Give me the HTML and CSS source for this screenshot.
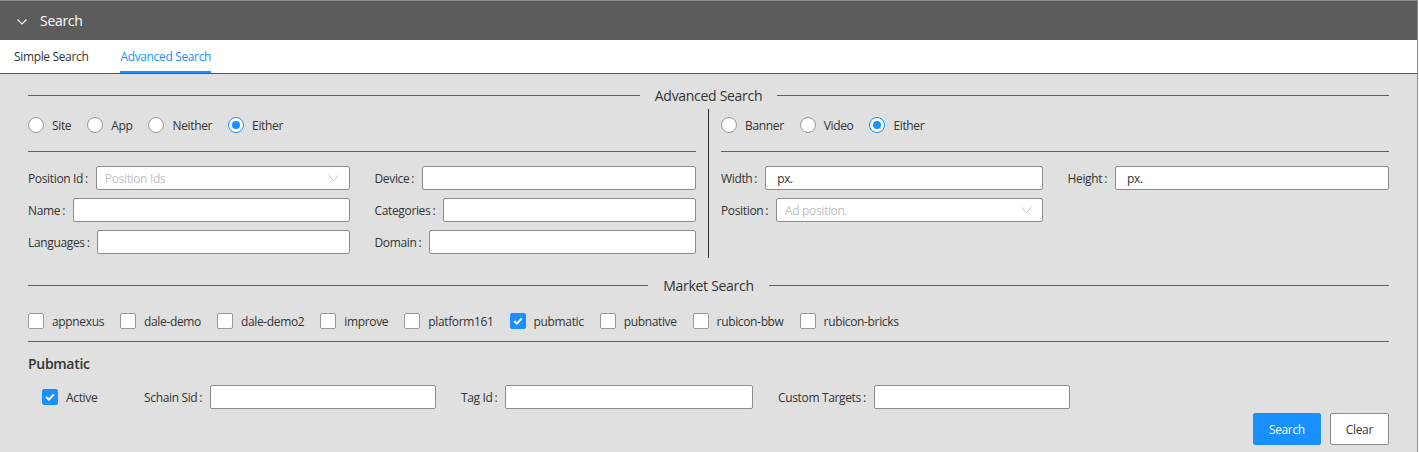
FILE: index.html
```html
<!DOCTYPE html>
<html>
<head>
<meta charset="utf-8">
<link rel="stylesheet" href="styles.css">
</head>
<body>
<div class="panel">
  <div class="panel-header">
    <svg class="chev" width="10" height="6" viewBox="0 0 10 6"><path d="M0.5 0.5 L5 5 L9.5 0.5" fill="none" stroke="#fff" stroke-width="1.1"/></svg>
    <span class="panel-title">Search</span>
  </div>
  <div class="tabs">
    <div class="tab">Simple Search</div>
    <div class="tab active">Advanced Search</div>
  </div>
  <div class="content">
    <div class="divider"><span>Advanced Search</span></div>
    <div class="adv">
      <div class="col">
        <div class="radios">
          <label class="radio"><span class="circle"></span><span class="rtext">Site</span></label>
          <label class="radio"><span class="circle"></span><span class="rtext">App</span></label>
          <label class="radio"><span class="circle"></span><span class="rtext">Neither</span></label>
          <label class="radio"><span class="circle on"></span><span class="rtext">Either</span></label>
        </div>
        <div class="hr"></div>
        <div class="grid">
          <div class="field"><span class="lbl">Position Id<span class="colon">:</span></span><div class="input select"><span class="ph">Position Ids</span><svg class="arrow" width="11" height="7" viewBox="0 0 11 7"><path d="M0.5 0.5 L5.5 5.8 L10.5 0.5" fill="none" stroke="#bfbfbf" stroke-width="1"/></svg></div></div>
          <div class="field"><span class="lbl">Device<span class="colon">:</span></span><div class="input"></div></div>
          <div class="field"><span class="lbl">Name<span class="colon">:</span></span><div class="input"></div></div>
          <div class="field"><span class="lbl">Categories<span class="colon">:</span></span><div class="input"></div></div>
          <div class="field"><span class="lbl">Languages<span class="colon">:</span></span><div class="input"></div></div>
          <div class="field"><span class="lbl">Domain<span class="colon">:</span></span><div class="input"></div></div>
        </div>
      </div>
      <div class="vsep"></div>
      <div class="col">
        <div class="radios">
          <label class="radio"><span class="circle"></span><span class="rtext">Banner</span></label>
          <label class="radio"><span class="circle"></span><span class="rtext">Video</span></label>
          <label class="radio"><span class="circle on"></span><span class="rtext">Either</span></label>
        </div>
        <div class="hr"></div>
        <div class="grid">
          <div class="field"><span class="lbl">Width<span class="colon">:</span></span><div class="input"><span class="val">px.</span></div></div>
          <div class="field"><span class="lbl">Height<span class="colon">:</span></span><div class="input"><span class="val">px.</span></div></div>
          <div class="field"><span class="lbl">Position<span class="colon">:</span></span><div class="input select"><span class="ph">Ad position.</span><svg class="arrow" width="11" height="7" viewBox="0 0 11 7"><path d="M0.5 0.5 L5.5 5.8 L10.5 0.5" fill="none" stroke="#bfbfbf" stroke-width="1"/></svg></div></div>
        </div>
      </div>
    </div>
    <div class="divider market"><span>Market Search</span></div>
    <div class="checks">
      <label class="check"><span class="box"></span><span class="ctext">appnexus</span></label>
      <label class="check"><span class="box"></span><span class="ctext">dale-demo</span></label>
      <label class="check"><span class="box"></span><span class="ctext">dale-demo2</span></label>
      <label class="check"><span class="box"></span><span class="ctext">improve</span></label>
      <label class="check"><span class="box"></span><span class="ctext">platform161</span></label>
      <label class="check"><span class="box on"><svg width="10" height="8" viewBox="0 0 10 8"><path d="M1.2 4 L3.9 6.6 L8.8 1.4" fill="none" stroke="#fff" stroke-width="2"/></svg></span><span class="ctext">pubmatic</span></label>
      <label class="check"><span class="box"></span><span class="ctext">pubnative</span></label>
      <label class="check"><span class="box"></span><span class="ctext">rubicon-bbw</span></label>
      <label class="check"><span class="box"></span><span class="ctext">rubicon-bricks</span></label>
    </div>
    <div class="hr full"></div>
    <h3 class="section">Pubmatic</h3>
    <div class="pub-row">
      <label class="check active-check"><span class="box on"><svg width="10" height="8" viewBox="0 0 10 8"><path d="M1.2 4 L3.9 6.6 L8.8 1.4" fill="none" stroke="#fff" stroke-width="2"/></svg></span><span class="ctext">Active</span></label>
      <div class="field pub"><span class="lbl">Schain Sid<span class="colon">:</span></span><div class="input"></div></div>
      <div class="field pub"><span class="lbl">Tag Id<span class="colon">:</span></span><div class="input"></div></div>
      <div class="field pub"><span class="lbl">Custom Targets<span class="colon">:</span></span><div class="input"></div></div>
    </div>
    <div class="actions">
      <button class="btn primary">Search</button>
      <button class="btn">Clear</button>
    </div>
  </div>
</div>
</body>
</html>
```
FILE: styles.css
```css
* { box-sizing: border-box; }
html, body { margin: 0; padding: 0; }
body {
  font-family: "Open Sans", "Noto Sans", sans-serif;
  font-size: 12px;
  letter-spacing: -0.35px;
  color: #333;
  background: #fff;
}
.panel {
  width: 1418px;
  border-top: 1px solid #8c8c8c;
  border-right: 1px solid #8c8c8c;
}
.panel-header {
  height: 39px;
  background: #5c5c5c;
  display: flex;
  align-items: center;
  padding-left: 17px;
}
.chev { margin-top: 3px; }
.panel-title {
  color: #fff;
  font-size: 14px;
  margin-left: 13px;
  letter-spacing: -0.3px;
}
.tabs {
  height: 34px;
  background: #fff;
  border-bottom: 1px solid #555;
  display: flex;
  padding-left: 14px;
}
.tab {
  margin-right: 32px;
  padding-top: 1px;
  line-height: 32px;
  height: 33px;
  color: #333;
}
.tab.active {
  color: #1890ff;
  border-bottom: 2px solid #1890ff;
}
.content {
  background: #e0e0e0;
  padding: 10px 28px 10px 28px;
}
.divider {
  display: flex;
  align-items: center;
  height: 22px;
  font-size: 14px;
  font-weight: 500;
  color: #333;
  letter-spacing: -0.3px;
}
.divider::before, .divider::after {
  content: "";
  flex: 1;
  border-top: 1px solid #5f5f5f;
}
.divider span { padding: 0 15px; }
.adv {
  display: flex;
  margin-top: 3px;
}
.col { width: 668px; }
.vsep {
  width: 1px;
  background: #333;
  margin: 0 12px;
}
.radios {
  display: flex;
  align-items: center;
  height: 32px;
}
.radio, .check {
  display: flex;
  align-items: center;
  margin-right: 8px;
  color: #333;
}
.circle {
  width: 16px;
  height: 16px;
  border: 1px solid #999;
  border-radius: 50%;
  background: #fff;
  position: relative;
}
.circle.on { border-color: #1890ff; }
.circle.on::after {
  content: "";
  position: absolute;
  left: 3px; top: 3px;
  width: 8px; height: 8px;
  border-radius: 50%;
  background: #1890ff;
}
.rtext, .ctext { padding: 0 8px; }
.hr {
  border-top: 1px solid #5f5f5f;
  margin-top: 10px;
}
.grid {
  display: grid;
  grid-template-columns: 1fr 1fr;
  column-gap: 25px;
  row-gap: 8px;
  margin-top: 14px;
  padding-bottom: 4px;
}
.field {
  display: flex;
  align-items: center;
  height: 24px;
}
.lbl {
  white-space: nowrap;
  color: #333;
}
.colon { margin: 0 8px 0 2px; }
.input {
  flex: 1;
  height: 24px;
  background: #fff;
  border: 1px solid #8c8c8c;
  border-radius: 2px;
  display: flex;
  align-items: center;
  padding: 0 11px 0 8px;
}
.input .val { padding-left: 3px; color: #333; }
.select { justify-content: space-between; }
.ph { color: #bfbfbf; }
.arrow { margin-right: -1px; }
.market { margin-top: 16px; }
.checks {
  display: flex;
  align-items: center;
  height: 22px;
  margin-top: 14px;
}
.box {
  width: 16px;
  height: 16px;
  border: 1px solid #999;
  border-radius: 2px;
  background: #fff;
  display: flex;
  align-items: center;
  justify-content: center;
}
.box.on { background: #1890ff; border-color: #1890ff; }
.hr.full { margin-top: 9px; }
.section {
  margin: 11px 0 0;
  font-size: 14px;
  font-weight: 600;
  line-height: 22px;
  color: #333;
  letter-spacing: -0.3px;
}
.pub-row {
  display: flex;
  align-items: center;
  margin-top: 10px;
  height: 24px;
}
.active-check {
  margin-left: 14px;
  width: 77px;
  margin-right: 25px;
}
.field.pub { width: 292px; margin-right: 25px; }
.actions {
  display: flex;
  justify-content: flex-end;
  margin-top: 4px;
}
.btn {
  font-family: inherit;
  font-size: 12px;
  letter-spacing: -0.35px;
  height: 32px;
  padding: 0 15px;
  border: 1px solid #8c8c8c;
  border-radius: 2px;
  background: #fff;
  color: #333;
  margin-left: 9px;
}
.btn.primary {
  background: #1890ff;
  border-color: #1890ff;
  color: #fff;
}
```
